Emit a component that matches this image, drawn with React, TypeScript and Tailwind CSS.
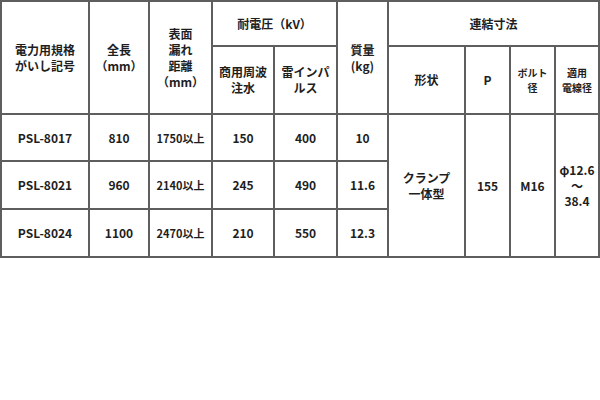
import React from "react";

const C = ({ className = "", children }: { className?: string; children?: React.ReactNode }) => (
  <div className={`bg-white flex items-center justify-center text-center ${className}`}>{children}</div>
);

const rows = [
  ["PSL-8017", "810", "1750以上", "150", "400", "10"],
  ["PSL-8021", "960", "2140以上", "245", "490", "11.6"],
  ["PSL-8024", "1100", "2470以上", "210", "550", "12.3"],
];

export default function App() {
  return (
    <div
      className="w-[600px] h-[400px] bg-white text-[#1e1e1e] font-bold"
      style={{ fontFamily: '"Noto Sans CJK JP", "Noto Sans", sans-serif' }}
    >
      <div className="grid grid-cols-[86px_58px_61px_60px_61px_49px_75px_43px_43px_42px] grid-rows-[43px_66px_45px_46px_46px] gap-[2px] p-[2px] bg-[#5e5e5e] text-[12px] leading-[16px] w-[600px]">
        <C className="row-span-2">電力用規格<br />がいし記号</C>
        <C className="row-span-2">全長<br />（mm）</C>
        <C className="row-span-2">表面<br />漏れ<br />距離<br />（mm）</C>
        <C className="col-span-2">耐電圧（kV）</C>
        <C className="row-span-2">質量<br />(kg)</C>
        <C className="col-span-4">連結寸法</C>
        <C>商用周波<br />注水</C>
        <C>雷インパ<br />ルス</C>
        <C>形状</C>
        <C>P</C>
        <C className="text-[10px] leading-[15px]">ボルト<br />径</C>
        <C className="text-[10px] leading-[15px]">適用<br />電線径</C>
        {rows.map((r, i) => (
          <React.Fragment key={i}>
            <C>{r[0]}</C>
            <C>{r[1]}</C>
            <C className="text-[11px]">{r[2]}</C>
            <C>{r[3]}</C>
            <C>{r[4]}</C>
            <C>{r[5]}</C>
            {i === 0 && (
              <>
                <C className="row-span-3">クランプ<br />一体型</C>
                <C className="row-span-3">155</C>
                <C className="row-span-3">M16</C>
                <C className="row-span-3 leading-[15.5px]">φ12.6<br />～<br />38.4</C>
              </>
            )}
          </React.Fragment>
        ))}
      </div>
    </div>
  );
}
